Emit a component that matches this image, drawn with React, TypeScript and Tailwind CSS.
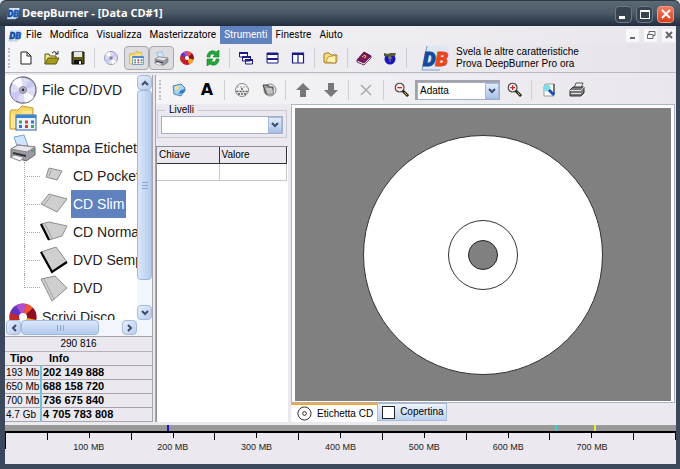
import { ReactNode } from 'react';
import { clsx } from 'clsx';

const menuItems = ['File', 'Modifica', 'Visualizza', 'Masterizzatore', 'Strumenti', 'Finestre', 'Aiuto'];

const labelTypes = [
  { name: 'CD Pocket', points: '9,6 22,9 17,18 6,15', edge: 'M11 8L9 14', spine: '' },
  { name: 'CD Slim', points: '9,4 27,9 17,22 1,14', edge: 'M11 6L4 15', spine: '', selected: true },
  { name: 'CD Normale', points: '1,6 9,4 27,8 22,18 9,22', edge: 'M5 6L12 20', spine: '1,6 9,22' },
  { name: 'DVD Semplice', points: '1,6 16,1 27,16 12,26', edge: '', spine: '1,6 12,26 27,16' },
  { name: 'DVD', points: '1,5 15,2 27,14 12,27', edge: 'M4 5L14 25', spine: '' },
];

const capacities = [
  { type: '193 Mb', info: '202 149 888' },
  { type: '650 Mb', info: '688 158 720' },
  { type: '700 Mb', info: '736 675 840' },
  { type: '4.7 Gb', info: '4 705 783 808' },
];

const rulerMax = 800;
const markers = [
  { mb: 193, color: 'bg-[#1414c8]' },
  { mb: 656, color: 'bg-[#35cfd4]' },
  { mb: 702, color: 'bg-[#f0ea28]' },
];

function Icon({ children, className = 'h-4 w-4', box = '0 0 16 16' }: { children: ReactNode; className?: string; box?: string }) {
  return (
    <svg viewBox={box} className={clsx('shrink-0', className)} fill="none" aria-hidden="true">
      {children}
    </svg>
  );
}

function DbLogo({ className, big = false }: { className: string; big?: boolean }) {
  return (
    <svg viewBox="0 0 30 28" className={clsx('shrink-0', className)} aria-hidden="true">
      <path d="M7 2H29L26 22L20 26H2Z" fill={big ? '#dfe7f3' : '#d4e6fa'} />
      <path d="M7 2L2 26H20" stroke="#7e9ac6" fill="none" />
      <text
        x="3"
        y="22"
        fontFamily="Roboto, sans-serif"
        fontSize="20"
        fontWeight="900"
        fontStyle="italic"
        fill="#124a9c"
        stroke="#124a9c"
      >
        D<tspan fill={big ? '#e8481c' : '#1a57ad'} stroke={big ? '#e8481c' : '#1a57ad'}>B</tspan>
      </text>
    </svg>
  );
}

function ToolButton({ label, pressed, className = 'w-[26px]', children }: { label: string; pressed?: boolean; className?: string; children: ReactNode }) {
  return (
    <button
      aria-label={label}
      aria-pressed={pressed}
      className={clsx(
        'flex h-6 shrink-0 items-center justify-center rounded-sm',
        pressed && 'border border-[#a9a8ad] bg-[#dddce1]',
        className,
      )}
    >
      {children}
    </button>
  );
}

function Separator() {
  return <div className="mx-[3px] h-5 w-px shrink-0 bg-[#d0ced5]" />;
}

function Grip() {
  return <div className="h-5 w-0 shrink-0 border-l-2 border-dotted border-[#c2c0c6]" />;
}

function Chevron({ direction }: { direction: 'up' | 'down' | 'left' | 'right' }) {
  const paths = { up: 'M1 6L4 3L7 6', down: 'M1 2L4 5L7 2', left: 'M6 1L3 4L6 7', right: 'M2 1L5 4L2 7' };
  return (
    <Icon box="0 0 8 8" className="h-2 w-2">
      <path d={paths[direction]} stroke="#3a4c70" strokeWidth="2" />
    </Icon>
  );
}

function ScrollButton({ direction }: { direction: 'up' | 'down' | 'left' | 'right' }) {
  return (
    <button
      aria-label={`Scorri ${direction}`}
      className="flex h-[15px] w-[15px] shrink-0 items-center justify-center rounded-sm border border-[#a5bbdd] bg-linear-to-br from-[#e6eefb] to-[#b9cdec]"
    >
      <Chevron direction={direction} />
    </button>
  );
}

function Dropdown({ label, options, className }: { label: string; options: string[]; className?: string }) {
  return (
    <div className={clsx('relative', className)}>
      <select
        aria-label={label}
        className="block h-[18px] w-full appearance-none border border-[#a0b0c8] bg-white pl-[2px] text-[10px] leading-4 text-black outline-none"
      >
        {options.map((option) => (
          <option key={option}>{option}</option>
        ))}
      </select>
      <span className="pointer-events-none absolute inset-y-px right-px flex w-[14px] items-center justify-center border border-[#a5bbdd] bg-linear-to-b from-[#e2ecfb] to-[#aac3e8]">
        <Chevron direction="down" />
      </span>
    </div>
  );
}

function DiscIcon({ hot = false, className = 'h-[14px] w-[14px]' }: { hot?: boolean; className?: string }) {
  return (
    <Icon box="0 0 28 28" className={className}>
      {hot ? (
        <>
          <circle cx="14" cy="14" r="13.5" fill="#d8232a" />
          <path d="M14 14L1 10A13.5 13.5 0 0 1 12 1Z" fill="#5b35c4" />
          <path d="M14 14L7 2.500A13.500 13.500 0 0 1 17 1Z" fill="#b04fd0" />
          <path d="M14 14L17 1A13.5 13.5 0 0 1 24 5Z" fill="#f0563a" />
          <path d="M14 14L24 5A13.5 13.5 0 0 1 27 17Z" fill="#8c0f24" />
          <path d="M14 14L27 17A13.5 13.5 0 0 1 18 27Z" fill="#f5a623" />
          <path d="M14 14L18 27A13.5 13.5 0 0 1 6 25Z" fill="#c81632" />
          <path d="M14 14L6 25A13.5 13.5 0 0 1 1 10Z" fill="#c02a28" />
          <circle cx="14" cy="14" r="4" fill="#fff" />
        </>
      ) : (
        <>
          <circle cx="14" cy="14" r="13" fill="#dcdcf4" stroke="#77778c" strokeWidth="1.4" />
          <path d="M14 14L3 7A13 13 0 0 1 12 1.5Z" fill="#fafaff" />
          <path d="M14 14L25 21A13 13 0 0 1 16 26.5Z" fill="#fafaff" />
          <path d="M14 14L1.5 17A13 13 0 0 0 7 25Z" fill="#c9c8f2" />
          <path d="M14 14L21 3.5A13 13 0 0 1 26 10Z" fill="#c9c8f4" />
          <circle cx="14" cy="14" r="3.5" fill="#b6b5cc" stroke="#88889c" />
          <circle cx="14" cy="14" r="1.4" fill="#333" />
        </>
      )}
    </Icon>
  );
}

function AutorunIcon({ className }: { className: string }) {
  return (
    <Icon box="0 0 28 28" className={className}>
      <path d="M1 7L2 5H9L13 1L24 3V24H1Z" fill="#f5d76c" stroke="#c49a2c" />
      <path d="M2 9H12L14 6H23V23H2Z" fill="#fbe793" />
      <rect x="7" y="10" width="20" height="15" fill="#eef3fb" stroke="#2a63a8" />
      <rect x="7" y="10" width="20" height="3" fill="#3b86d2" />
      <path d="M10 17H13M22 21.500H25" stroke="#3fa652" strokeWidth="3" />
      <path d="M16 17H19M16 21.500H19" stroke="#d43c3c" strokeWidth="3" />
      <path d="M22 17H25M10 21.500H13" stroke="#3b6fc4" strokeWidth="3" />
    </Icon>
  );
}

function PrinterIcon({ className }: { className: string }) {
  return (
    <Icon box="0 0 28 28" className={className}>
      <path d="M5 3L15 1L19 12L9 15Z" fill="#cfe5fb" stroke="#7ca2cc" />
      <path d="M2 15L9 11L26 13L26 21L17 27L2 22Z" fill="#9a9aa0" stroke="#66666c" />
      <path d="M2 15L9 11L26 13L18 18Z" fill="#e6e6ea" stroke="#84848a" />
      <path d="M4 19L17 22" stroke="#33333a" strokeWidth="2" />
      <path d="M6 21L15 23.5L11 27L1 23Z" fill="#f4f4f7" stroke="#84848a" />
      <path d="M22 17H25" stroke="#3fa652" strokeWidth="1.5" />
    </Icon>
  );
}

function CaseIcon({ points, edge, spine }: { points: string; edge: string; spine: string }) {
  return (
    <Icon box="0 0 28 28" className="h-7 w-7">
      <polygon points={points} fill="#cfcfcf" stroke="#8c8c8c" />
      <path d={edge} stroke="#a0a0a0" />
      <polyline points={spine} stroke="#000" strokeWidth="2.2" />
    </Icon>
  );
}

function MagnifierIcon({ plus = false }: { plus?: boolean }) {
  return (
    <Icon className="h-[15px] w-[15px]">
      <path d="M9 9L15 15" stroke="#222" strokeWidth="3" />
      <path d="M11 11L14 14" stroke="#e0d030" />
      <circle cx="6" cy="6" r="4.7" fill="#fbeeee" stroke="#444" strokeWidth="1.2" />
      <path d={plus ? 'M3.5 6H8.5M6 3.5V8.5' : 'M3.5 6H8.5'} stroke="#cc2222" strokeWidth="1.4" />
    </Icon>
  );
}

function TitleBar() {
  return (
    <header className="flex h-[26px] shrink-0 items-center rounded-t-md bg-linear-to-b from-[#5d6a77] via-[#4b5865] to-[#222e40] px-[6px] shadow-[inset_0_1px_0_#2d3742]">
      <DbLogo className="h-[13px] w-[14px]" />
      <h1 className="ml-[2px] grow font-['Open_Sans',sans-serif] text-[11px] leading-4 font-bold text-white">DeepBurner - [Data CD#1]</h1>
      <div className="flex gap-1 pt-[2px]">
        <button aria-label="Riduci a icona" className="flex h-[17px] w-[17px] items-end justify-start rounded-sm border border-[#6d7987] bg-[#37434f] p-[3px]">
          <span className="h-[3px] w-[6px] bg-white" />
        </button>
        <button aria-label="Ingrandisci" className="flex h-[17px] w-[17px] items-center justify-center rounded-sm border border-[#6d7987] bg-[#37434f]">
          <span className="h-[9px] w-[10px] border border-t-2 border-white" />
        </button>
        <button aria-label="Chiudi" className="flex h-[17px] w-[17px] items-center justify-center rounded-sm border border-[#f09a80] bg-linear-to-b from-[#ee7b5c] to-[#d93e18]">
          <Icon box="0 0 10 10" className="h-[10px] w-[10px]">
            <path d="M1 1L9 9M9 1L1 9" stroke="#fff" strokeWidth="2" />
          </Icon>
        </button>
      </div>
    </header>
  );
}

function MenuBar() {
  return (
    <nav className="flex h-[18px] shrink-0 items-center bg-linear-to-r from-[#f6f5f7] to-[#e9e7ed] pr-px pl-[3px] font-[Roboto,sans-serif] text-[10px] leading-[18px]">
      <DbLogo className="h-[13px] w-[14px]" />
      {menuItems.map((item) => (
        <button key={item} className={clsx('h-full px-1', item === 'Strumenti' && 'bg-[#5f81be] text-white')}>
          {item}
        </button>
      ))}
      <div className="ml-auto flex gap-[5px] text-[#66666b]">
        <button aria-label="Riduci finestra" className="flex h-[13px] w-[13px] items-center justify-center bg-[#f8f7fa]">
          <Icon box="0 0 10 10" className="h-[10px] w-[10px]"><path d="M2 8H7" stroke="currentColor" strokeWidth="2" /></Icon>
        </button>
        <button aria-label="Ripristina finestra" className="flex h-[13px] w-[13px] items-center justify-center bg-[#f8f7fa]">
          <Icon box="0 0 10 10" className="h-[10px] w-[10px]"><path d="M3 4V1.5H9V5.5H7M1.5 4.5H7V8.5H1.5Z" stroke="currentColor" /></Icon>
        </button>
        <button aria-label="Chiudi finestra" className="flex h-[13px] w-[13px] items-center justify-center bg-[#f8f7fa]">
          <Icon box="0 0 10 10" className="h-[10px] w-[10px]"><path d="M2 2L8 8M8 2L2 8" stroke="currentColor" strokeWidth="2" /></Icon>
        </button>
      </div>
    </nav>
  );
}

function MainToolbar() {
  return (
    <div className="flex h-[29px] shrink-0 items-center border-b border-[#b9b8be] bg-linear-to-r from-[#f5f4f6] to-[#e6e4ea] pl-[3px]">
      <Grip />
      <div className="ml-[3px] flex items-center">
        <ToolButton label="Nuovo">
          <Icon><path d="M3 2H9L13 6V14H3Z" fill="#fff" stroke="#222" /><path d="M9 2V6H13" stroke="#222" /></Icon>
        </ToolButton>
        <ToolButton label="Apri">
          <Icon>
            <path d="M1 14V4H5L6 6H12V9" fill="#f3e98a" stroke="#5c5a10" />
            <path d="M1 14L4 8H15L12 14Z" fill="#a59b1e" stroke="#5c5a10" />
            <path d="M8 3Q11 0 13 4M11 4H14V1" stroke="#222" />
          </Icon>
        </ToolButton>
        <ToolButton label="Salva">
          <Icon><path d="M2 2H14V14H2Z" fill="#5f5c14" stroke="#111" /><path d="M4 2H12V7H4Z" fill="#e8e8ea" /><path d="M4 10H12V14H4Z" fill="#111" /><path d="M9 11H11V14H9Z" fill="#eee" /></Icon>
        </ToolButton>
        <Separator />
        <ToolButton label="File CD/DVD"><DiscIcon /></ToolButton>
        <ToolButton label="Autorun" pressed className="w-[25px]"><AutorunIcon className="h-[15px] w-[15px]" /></ToolButton>
        <ToolButton label="Stampa etichetta" pressed className="w-[25px]"><PrinterIcon className="h-[15px] w-[15px]" /></ToolButton>
        <ToolButton label="Scrivi disco"><DiscIcon hot /></ToolButton>
        <ToolButton label="Aggiorna">
          <Icon>
            <path d="M2 7C2 2 7 -1 11 2L14 0V7H8L10 5C7 3 5 4 5 7Z" fill="#25a83a" stroke="#0e7a22" strokeWidth=".6" />
            <path d="M14 9C14 14 9 17 5 14L2 16V9H8L6 11C9 13 11 12 11 9Z" fill="#25a83a" stroke="#0e7a22" strokeWidth=".6" />
          </Icon>
        </ToolButton>
        <Separator />
        <ToolButton label="Sovrapponi">
          <Icon>
            <path d="M1.5 2.5H9.5V7H1.5ZM4.5 6.5H12.5V11H4.5ZM7.5 10H14.5V14H7.5Z" fill="#fff" stroke="#1c1c86" />
            <path d="M1 3H10M4 7H13M7 10H15" stroke="#1c1c86" strokeWidth="2" />
          </Icon>
        </ToolButton>
        <ToolButton label="Affianca orizzontalmente">
          <Icon><path d="M3 3H14V13H3Z" fill="#fff" stroke="#1c1c86" /><path d="M3 4H14M3 9H14" stroke="#1c1c86" strokeWidth="2" /></Icon>
        </ToolButton>
        <ToolButton label="Affianca verticalmente">
          <Icon><path d="M2.5 3H13.5V13H2.5ZM8 3V13" fill="#fff" stroke="#1c1c86" strokeWidth="1.2" /><path d="M2 4H14" stroke="#1c1c86" strokeWidth="2" /></Icon>
        </ToolButton>
        <Separator />
        <ToolButton label="Esplora">
          <Icon>
            <path d="M1 12V4L3 3H6L8 5H13V13H2Z" fill="#f7da79" stroke="#9c7a2a" />
            <path d="M3 12L5 7L14 5V11L12 13Z" fill="#fcefb0" stroke="#b08e3a" strokeWidth=".8" />
            <path d="M13 4V13" stroke="#a98a3a" />
          </Icon>
        </ToolButton>
        <Separator />
        <ToolButton label="Guida">
          <Icon>
            <path d="M1 10L8 2L15 6L8 13Z" fill="#7d1565" stroke="#4d0c40" />
            <path d="M1 10L8 13L15 6V8L8 15L1 12Z" fill="#f2ece0" stroke="#4d0c40" strokeWidth=".8" />
            <path d="M6 7L9 5L10 7L8 8" stroke="#f3c838" />
          </Icon>
        </ToolButton>
        <ToolButton label="Sito web">
          <Icon>
            <circle cx="8" cy="9" r="5.5" fill="#1818ba" />
            <path d="M2 3L6 4L9 3L14 3L13 6L9 6L8 8L5 6L2 6Z" fill="#565c3a" />
            <path d="M8 6V12M6 8H10" stroke="#b9a540" strokeWidth=".8" />
          </Icon>
        </ToolButton>
        <Separator />
      </div>
      <a href="#pro" className="ml-[10px] flex items-center gap-[6px] text-[10px] leading-3 text-black">
        <DbLogo big className="h-7 w-[30px]" />
        <span>
          Svela le altre caratteristiche
          <br />
          Prova DeepBurner Pro ora
        </span>
      </a>
    </div>
  );
}

function TreeRow({ icon, label }: { icon: ReactNode; label: string }) {
  return (
    <button className="flex h-[29px] shrink-0 items-center gap-[5px] pl-1 text-left whitespace-nowrap">
      {icon}
      {label}
    </button>
  );
}

function Sidebar() {
  return (
    <aside className="flex w-[148px] shrink-0 flex-col border-r border-[#a7a6ab]">
      <div className="flex min-h-0 grow">
        <div className="flex min-w-0 grow flex-col overflow-hidden bg-white text-sm leading-5 text-[#222]">
          <TreeRow icon={<DiscIcon className="h-7 w-7" />} label="File CD/DVD" />
          <TreeRow icon={<AutorunIcon className="h-7 w-7" />} label="Autorun" />
          <TreeRow icon={<PrinterIcon className="h-7 w-7" />} label="Stampa Etichetta" />
          <ul className="shrink-0">
            {labelTypes.map((type, index) => (
              <li key={type.name} className="flex h-7 items-center pl-[19px]">
                <div className={clsx('w-4 shrink-0 border-l border-dotted border-[#aaa]', index === labelTypes.length - 1 ? 'mb-[14px] h-[14px] border-b' : 'flex h-full items-center')}>
                  {index < labelTypes.length - 1 && <span className="w-full border-t border-dotted border-[#aaa]" />}
                </div>
                <CaseIcon points={type.points} edge={type.edge} spine={type.spine} />
                <button className={clsx('ml-[3px] h-7 px-[2px] whitespace-nowrap', type.selected && 'bg-[#5f81be] text-white')}>{type.name}</button>
              </li>
            ))}
          </ul>
          <TreeRow icon={<DiscIcon hot className="h-7 w-7" />} label="Scrivi Disco" />
        </div>
        <div className="flex w-[15px] shrink-0 flex-col bg-[#f2f5fb]">
          <ScrollButton direction="up" />
          <div className="flex h-[190px] items-center justify-center rounded-sm border border-[#9fb8df] bg-linear-to-r from-[#dbe7fa] to-[#b4cbec]">
            <span className="flex h-[7px] w-[6px] flex-col justify-center border-y border-[#8ba6cf]">
              <span className="h-px bg-[#8ba6cf]" />
            </span>
          </div>
          <div className="grow" />
          <ScrollButton direction="down" />
        </div>
      </div>
      <div className="flex h-4 shrink-0 bg-[#f2f5fb] pr-[15px] pl-px">
        <ScrollButton direction="left" />
        <div className="flex h-[15px] w-[78px] items-center justify-center rounded-sm border border-[#9fb8df] bg-linear-to-b from-[#dbe7fa] to-[#b4cbec]">
          <span className="flex h-[6px] w-[7px] justify-center border-x border-[#8ba6cf]">
            <span className="w-px bg-[#8ba6cf]" />
          </span>
        </div>
        <div className="grow" />
        <ScrollButton direction="right" />
      </div>
      <p className="border-t border-[#a7a6ab] text-center text-[10px] leading-[14px]">290 816</p>
      <table className="w-full border-collapse text-left leading-[13px]">
        <thead>
          <tr className="border-t border-[#b4b3b8] text-[11px]">
            <th className="w-9 pl-[5px]">Tipo</th>
            <th className="pl-2">Info</th>
          </tr>
        </thead>
        <tbody>
          {capacities.map((row) => (
            <tr key={row.type} className="border-y border-[#a7a6ab]">
              <td className="border-r-2 border-[#6fc6dc] pl-px text-[10px] whitespace-nowrap">{row.type}</td>
              <td className="pl-px text-[11px] font-bold">{row.info}</td>
            </tr>
          ))}
        </tbody>
      </table>
    </aside>
  );
}

function EditorToolbar() {
  return (
    <div className="flex h-[29px] shrink-0 items-center bg-linear-to-r from-[#f5f4f6] to-[#e9e7ed] pl-[3px]">
      <Grip />
      <div className="ml-1 flex items-center">
        <ToolButton label="Inserisci immagine" className="w-7">
          <Icon>
            <path d="M2 4L10 2L14 6L10 14L3 12Z" fill="#a8d4f2" stroke="#4b82b4" />
            <circle cx="6" cy="6" r="2" fill="#f6e27a" />
            <path d="M7 12L10 8L15 7L13 11Z" fill="#2f7fd0" />
          </Icon>
        </ToolButton>
        <ToolButton label="Inserisci testo" className="w-7 font-['DejaVu_Sans',sans-serif] text-base font-bold">A</ToolButton>
        <Separator />
        <ToolButton label="Testo circolare" className="w-[27px]">
          <Icon>
            <circle cx="8" cy="8" r="6.500" fill="#f4f4f4" stroke="#888" />
            <path d="M3 5H13" stroke="#999" strokeDasharray="2 1" />
            <path d="M2.500 9.500H13.500M4 12H12" stroke="#555" strokeWidth="1.500" strokeDasharray="2 1" />
            <circle cx="8" cy="7" r="1" fill="#555" />
          </Icon>
        </ToolButton>
        <ToolButton label="Elenco file" className="w-[27px]">
          <Icon>
            <circle cx="9" cy="8" r="6" fill="#e4e4e4" stroke="#888" />
            <path d="M2 3H7L8 5H12V12H5Z" fill="#999" stroke="#444" />
            <path d="M5 7H11M6 9H12M6 11H12" stroke="#eee" />
          </Icon>
        </ToolButton>
        <Separator />
        <ToolButton label="Porta su" className="w-7">
          <Icon><path d="M8 1L15 8H11V15H5V8H1Z" fill="#77777b" /></Icon>
        </ToolButton>
        <ToolButton label="Porta giù" className="w-7">
          <Icon><path d="M8 15L15 8H11V1H5V8H1Z" fill="#77777b" /></Icon>
        </ToolButton>
        <Separator />
        <ToolButton label="Elimina" className="w-7">
          <Icon><path d="M3 3L13 13M13 3L3 13" stroke="#aaa9ae" strokeWidth="1.5" /></Icon>
        </ToolButton>
        <Separator />
        <ToolButton label="Riduci zoom" className="w-7"><MagnifierIcon /></ToolButton>
        <Dropdown label="Zoom" options={['Adatta', '100%']} className="w-[85px] border-2 border-r-0 border-b-0 border-[#a3a2a8]" />
        <ToolButton label="Aumenta zoom" className="w-7"><MagnifierIcon plus /></ToolButton>
        <Separator />
        <ToolButton label="Anteprima" className="w-7">
          <Icon><path d="M4 2H13V14H3V5Z" fill="#fff" stroke="#999" /><circle cx="6" cy="6" r="3.5" fill="#7fdde8" /><path d="M8 8L13 13" stroke="#1d4fc0" strokeWidth="3" /><path d="M13 2V12" stroke="#222" /></Icon>
        </ToolButton>
        <ToolButton label="Stampa" className="w-[27px]">
          <Icon><path d="M5 6L7 1H14L12 6Z" fill="#eee" stroke="#555" /><path d="M1 8L4 5H15V11L12 14H1Z" fill="#77777b" stroke="#333" /><path d="M1 8.5H12L15 5M2 11.5H12" stroke="#ddd" /></Icon>
        </ToolButton>
      </div>
    </div>
  );
}

function LayersPanel() {
  return (
    <section className="flex w-[132px] shrink-0 flex-col">
      <fieldset className="mx-px border border-[#c9c7cf] px-[3px] pb-[3px]">
        <legend className="ml-1 px-1 text-[10px] leading-3">Livelli</legend>
        <Dropdown label="Livelli" options={['']} />
      </fieldset>
      <div className="mt-2 grow border-t border-l border-[#8f8e94] bg-white">
        <table className="w-[130px] table-fixed border-collapse text-left text-[10px] leading-4">
          <thead>
            <tr className="bg-[#ebe9ef]">
              <th className="w-[62px] border-r border-b border-[#333] pl-[2px] font-normal">Chiave</th>
              <th className="border-r border-b border-[#333] pl-[2px] font-normal">Valore</th>
            </tr>
          </thead>
          <tbody>
            <tr className="h-[17px]">
              <td className="border-r border-b border-[#c9c8cc]" />
              <td className="border-r border-b border-[#c9c8cc]" />
            </tr>
          </tbody>
        </table>
      </div>
    </section>
  );
}

function LabelCanvas() {
  return (
    <section className="mr-px ml-[3px] flex min-w-0 grow flex-col">
      <div className="min-h-0 grow border border-[#a9b4c6] bg-white p-[3px] pb-px">
        <div className="flex h-full items-center justify-center bg-[#808080]">
          <svg viewBox="0 0 240 240" className="h-60 w-60" role="img" aria-label="Etichetta CD">
            <circle cx="120" cy="120" r="119.5" fill="#fff" stroke="#333" />
            <circle cx="120" cy="120" r="34.5" fill="#fff" stroke="#333" />
            <circle cx="120" cy="120" r="14.5" fill="#808080" stroke="#222" />
          </svg>
        </div>
      </div>
      <div className="flex h-[19px] shrink-0 text-[10px] leading-4">
        <button className="flex items-center gap-[5px] border-t-2 border-[#f3a735] bg-white pr-1 pl-[6px]">
          <Icon className="h-[15px] w-[15px]"><circle cx="8" cy="8" r="7" stroke="#222" /><circle cx="8" cy="8" r="2" stroke="#222" /></Icon>
          Etichetta CD
        </button>
        <button className="flex h-[18px] items-center gap-[5px] border border-[#a9bcd9] bg-linear-to-b from-[#edf3fb] to-[#bcd3f0] pr-[2px] pl-1">
          <Icon box="0 0 13 13" className="h-[13px] w-[13px]"><rect x=".5" y=".5" width="12" height="12" fill="#fff" stroke="#222" /></Icon>
          Copertina
        </button>
      </div>
    </section>
  );
}

function CapacityRuler() {
  return (
    <footer className="shrink-0 pb-[10px]">
      <div className="relative h-[6px] bg-[#999]">
        {markers.map((marker) => (
          <span key={marker.mb} className={clsx('absolute h-full w-[2px]', marker.color)} style={{ left: `${(marker.mb / rulerMax) * 100}%` }} />
        ))}
      </div>
      <div className="flex h-[9px] border-t-2 border-r border-black">
        {Array.from({ length: 16 }, (_, i) => (
          <div key={i} className={clsx('grow border-l border-black', i % 2 ? 'h-full' : i === 0 ? 'h-4' : 'h-[5px]')} />
        ))}
      </div>
      <div className="grid grid-cols-7 px-[6.25%] text-center text-[9px] leading-[14px] text-[#222]">
        {[100, 200, 300, 400, 500, 600, 700].map((mb) => (
          <span key={mb}>{mb} MB</span>
        ))}
      </div>
    </footer>
  );
}

export default function App() {
  return (
    <div className="bg-[#e4e6ea]">
      <div className="flex h-screen min-w-[640px] flex-col overflow-hidden rounded-t-md bg-[#3b475a] font-['Liberation_Sans',Arial,sans-serif] text-black">
        <TitleBar />
        <div className="mr-1 mb-[5px] ml-[5px] flex min-h-0 grow flex-col bg-[#ebe9ef]">
          <MenuBar />
          <MainToolbar />
          <main className="flex min-h-0 grow pt-[2px] pb-[3px]">
            <Sidebar />
            <div className="ml-[2px] flex min-w-0 grow flex-col border-l border-[#a7a6ab]">
              <EditorToolbar />
              <div className="flex min-h-0 grow">
                <LayersPanel />
                <LabelCanvas />
              </div>
            </div>
          </main>
          <CapacityRuler />
        </div>
      </div>
    </div>
  );
}
